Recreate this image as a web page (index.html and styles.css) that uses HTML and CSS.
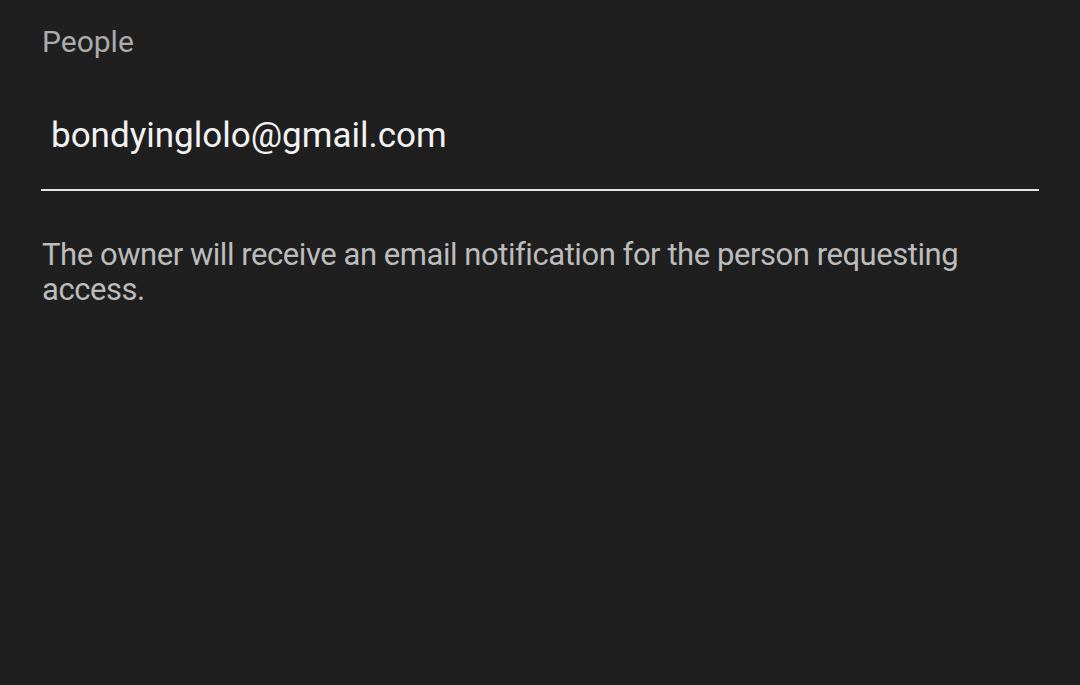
FILE: index.html
```html
<!DOCTYPE html>
<html>
  <head>
    <meta charset="utf-8">
    <title>Request access</title>
    <link rel="stylesheet" href="styles.css">
  </head>
  <body>
    <div class="sheet">
      <label class="field-label" for="people">People</label>
      <div class="field">
        <input id="people" class="field-input" type="text" value="bondyinglolo@gmail.com">
      </div>
      <p class="hint">The owner will receive an email notification for the person requesting access.</p>
    </div>
  </body>
</html>
```

FILE: styles.css
```css
html, body {
  margin: 0;
  height: 100%;
}

body {
  background-color: #1f1f1f;
  font-family: Roboto, "Noto Sans", sans-serif;
}

.sheet {
  padding: 22px 41px 0 41px;
}

.field-label {
  display: block;
  color: #ababab;
  font-size: 30px;
  line-height: 40px;
  padding-left: 1px;
}

/* underline sits under the typed address */
.field {
  margin-top: 51px;
  border-bottom: 2px solid #e6e6e6;
}

.field-input {
  display: block;
  width: 100%;
  box-sizing: border-box;
  background: transparent;
  border: none;
  outline: none;
  padding: 0 0 32px 10px;
  margin: 0;
  color: #f2f2f2;
  font-family: inherit;
  font-size: 35px;
  line-height: 44px;
  height: 76px;
}

.hint {
  margin: 46px 0 0 1px;
  color: #bcbcbc;
  font-size: 31px;
  line-height: 35px;
  letter-spacing: -0.45px;
}
```
